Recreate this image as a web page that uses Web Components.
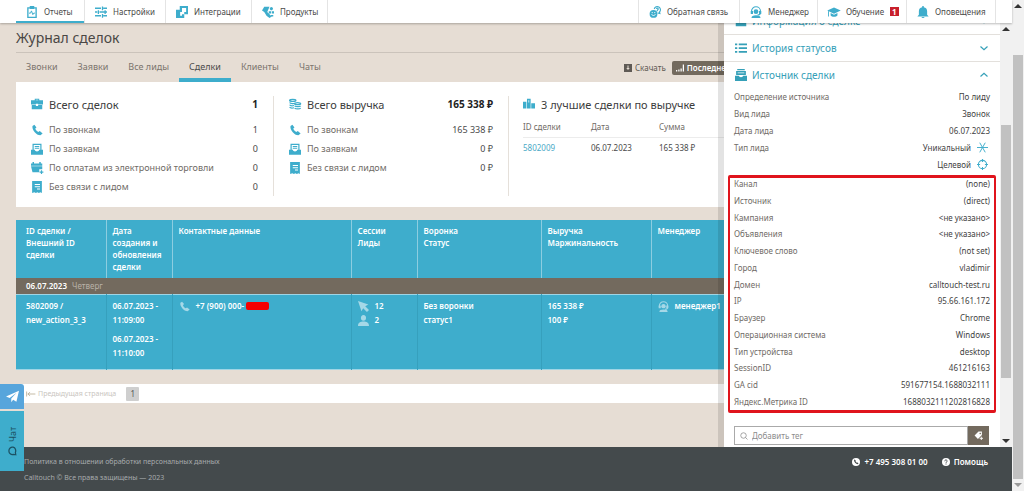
<!DOCTYPE html>
<html lang="ru">
<head>
<meta charset="utf-8">
<title>Журнал сделок</title>
<style>
  html { height: 100%; }
  body { margin: 0; min-height: 100%; display: flex; font-family: "Noto Sans", "Open Sans", sans-serif; font-size: 9px; color: #4a4a4a;
    --blue: #3eadcc; --teal: #35a0b8; --brown: #736a5e; --sand: #e6ddd4; }
  ct-app { flex: 1; }
</style>
</head>
<body>
<ct-app></ct-app>
<script>
const ICONS = {
  report: '<path fill="none" stroke="currentColor" stroke-width="1.8" d="M2.5 2.5h11v12.600h-11z"/><path fill="currentColor" d="M5 0h6v4H5z"/><path fill="none" stroke="currentColor" stroke-width="1.300" d="M4 9.500h2l1.300-3 1.800 5 1.200-2H12"/>',
  sliders: '<g fill="none" stroke="currentColor" stroke-width="1.700"><path d="M0 3h8M11 3h5M0 8h3M6 8h10M0 13h8M11 13h5M10 .5v5M4.500 5.500v5M10 10.500v5M13.500 5.500v5"/></g>',
  blocks: '<path fill="currentColor" fill-rule="evenodd" d="M5 0h11v11h-5v5H0V5h5zm3 2.500V8H5.500v5H8v-2h3V8h2.500V2.500z"/>',
  product: '<path fill="currentColor" d="M3 1h7L7 8l6 6-3 2-4-3-3-5-3-2zM11 2a2 2 0 1 1 3 3 2 2 0 0 1-3-3zM13 7h3v3h-3zM9 7h3v3H9zM12 12h3v2h-3z"/>',
  feedback: '<g fill="none" stroke="currentColor" stroke-width="1.500"><path d="M7 4a4.200 4.200 0 1 1 7 4l.5 2-3-.800"/><path d="M9.500 3.600c1-1.600 3.500-.6 2.600 1L11 6v1"/></g><circle cx="6" cy="10.500" r="5.200" fill="currentColor"/><path d="M3.500 11a2.700 2.700 0 0 0 5 0" fill="none" stroke="#fff" stroke-width="1.200"/><circle cx="4.300" cy="8.700" r=".8" fill="#fff"/><circle cx="7.700" cy="8.700" r=".8" fill="#fff"/>',
  agent: '<path d="M2 9V7a6 6 0 0 1 12 0v2c0 2-2 3-4 3" fill="none" stroke="currentColor" stroke-width="1.500"/><path fill="currentColor" d="M1 6.500h3v4H1zM12 6.500h3v4h-3zM2 16c0-2.500 2-3.600 6-3.600s6 1.100 6 3.600z"/><circle cx="8" cy="7.500" r="3.200" fill="currentColor"/>',
  cap: '<path fill="currentColor" d="M8 2l9 4-9 4.300L-1 6zM3.500 9.300L8 11.500l4.600-2.200v3.500C11 15 5 15 3.500 12.800zM0 7h1.200v7H0z"/>',
  bell: '<path fill="currentColor" d="M7 0h2v1.500c3 .5 4.500 2.500 4.500 5.500v4.500L15.500 14H.5l2-2.500V7c0-3 1.500-5 4.500-5.500zM6 14.500h4a2 1.500 0 0 1-4 0z"/>',
  briefcase: '<path fill="currentColor" fill-rule="evenodd" d="M5 3V1h6v2h5v5.500H9.500V7.500h-3v1H0V3zm1.300 0h3.400v-.8H6.300zM1 9.300h5.500v1.200h3V9.300H15V15H1z"/>',
  phone: '<path fill="currentColor" d="M4.500 1L2 2.500C.8 7 7 15 12.500 15l3-2.500-3.800-3.200-2 1.300C8 9.800 6 7.500 5.700 6l1.600-1.500z"/>',
  mail: '<path fill="currentColor" fill-rule="evenodd" d="M2 1h12v8h2v6.500H0V9h2zm1.600 1.500V9H5c.5 3 5.500 3 6 0h1.400V2.500zM5 4h6v1.300H5zm0 2.300h6v1.300H5z"/>',
  calendar: '<path fill="currentColor" d="M0 2h2V0h2v2h7V0h2v2h2v3H0zM0 5.800h15v4h-4v4H2z"/><path fill="none" stroke="currentColor" stroke-width="1.600" d="M14 11v5M11.500 13.500h5"/>',
  doc: '<path fill="currentColor" fill-rule="evenodd" d="M1.500 0h13v16l-2-1-2 1-2-1-2 1-2-1-3 1zM5 4v1.400h7V4zm0 3v1.400h7V7zm3 3v1.400h4V10z"/>',
  coins: '<g fill="none" stroke="currentColor" stroke-width="1.700"><ellipse cx="5" cy="3.200" rx="4.200" ry="1.400"/><path d="M.8 6c1 1.800 6 1.800 7 .8M.8 9c1 1.500 4 1.500 6 1M.8 12c1 1.500 4 1.500 6 1"/><ellipse cx="11.500" cy="7.500" rx="4" ry="1.300"/><path d="M7.500 10.500c1.500 1.500 7 1.500 8 0M7.500 13.500c1.500 1.500 7 1.500 8 0"/></g>',
  podium: '<path fill="currentColor" d="M5.300 1h4.900v13H5.300zM0 5h4.500v9H0zM11 7h5v7h-5z"/><path stroke="#fff" d="M7.700 3v3"/>',
  list: '<path fill="currentColor" d="M0 2h3v2.400H0zM5 2h11v2.400H5zM0 7h3v2.400H0zM5 7h11v2.400H5zM0 12h3v2.400H0zM5 12h11v2.400H5z"/>',
  inbox: '<path fill="currentColor" fill-rule="evenodd" d="M3 0h10v1.500H3zM1.500 2.500h13V8h-13zM3.500 4.500v1h9v-1zM0 9h5c.5 2.500 5.500 2.500 6 0h5v7H0z"/>',
  down: '<path fill="none" stroke="currentColor" stroke-width="2.400" d="M1 5l7 6.500L15 5"/>',
  up: '<path fill="none" stroke="currentColor" stroke-width="2.400" d="M1 11l7-6.500L15 11"/>',
  star: '<path fill="none" stroke="currentColor" stroke-width="1.400" d="M0 8h16M4 1l8 14M12 1L4 15"/>',
  target: '<circle cx="8" cy="8" r="6" fill="none" stroke="currentColor" stroke-width="1.500"/><path stroke="currentColor" stroke-width="1.500" d="M8 0v4.500M8 11.500V16M0 8h4.500M11.500 8H16"/>',
  cursor: '<path fill="currentColor" d="M0 0l15 5-4.500 2.500L16 13l-3 3-5.500-5.500L5 15z"/>',
  person: '<path fill="currentColor" d="M8 0c5 0 5 8.500 0 8.500S3 0 8 0zM0 16c0-5 3.500-6.500 8-6.500s8 1.500 8 6.500z"/>',
  save: '<path fill="currentColor" fill-rule="evenodd" d="M0 0h16v16H0zm7 3v5H4.500L8 12l3.500-4H9V3z"/>',
  signal: '<path fill="currentColor" d="M0 12h2.500v3H0zM4.500 11H7v4H4.500zM9 9h2.500v6H9zM13.500 1H16v14h-2.500z"/>',
  search: '<circle cx="7" cy="7" r="5.500" fill="none" stroke="currentColor" stroke-width="1.500"/><path stroke="currentColor" stroke-width="1.500" d="M11 11l4 4"/>',
  tag: '<path fill="currentColor" fill-rule="evenodd" d="M8 1h6v6l-7 7-6-6zm3 2a1.300 1.300 0 1 0 .1 0z"/><path stroke="currentColor" stroke-width="1.600" d="M13 10v6M10 13h6"/>',
  plane: '<path fill="currentColor" d="M16 1L0 8l4.500 1.800L13 3.500 6.500 10.500V15l2.300-3 4 2.500z"/>',
  bubble: '<path fill="none" stroke="currentColor" stroke-width="2" d="M2 14l.5-4a6 5.500 0 1 1 3 3.400z"/>',
  call: '<circle cx="8" cy="8" r="8" fill="#fff"/><path fill="#444a4c" d="M5.500 3L4 4.200C4 8.500 7.500 12 11.500 12.300L13 10.600l-2.200-1.800-1.200.8C8.600 9 7.400 7.600 7 6.500l.7-1.200z"/>',
  help: '<circle cx="8" cy="8" r="8" fill="#fff"/><path fill="none" stroke="#444a4c" stroke-width="1.800" d="M5.500 6.500c0-4 5.500-3 4.700 0C10 7.700 8 8 8 9.800M8 11v2"/>',
  prev: '<path fill="none" stroke="currentColor" stroke-width="1.300" d="M1 4v8M15 8H3M6.500 5L3 8l3.500 3"/>'
};

function define(name, css, html, setup) {
  const t = document.createElement('template');
  customElements.define(name, class extends HTMLElement {
    constructor() { super(); this.attachShadow({ mode: 'open' }); }
    connectedCallback() {
      t.innerHTML = '<style>*{box-sizing:border-box}' + css + '</style>' + (typeof html === 'function' ? html(this) : html);
      this.shadowRoot.replaceChildren(t.content.cloneNode(true));
      if (setup) setup(this);
    }
  });
}
const icon = (n, c = '') => `<ct-icon name="${n}" class="${c}"></ct-icon>`;

define('ct-icon', ':host{display:inline-block;flex:none;width:12px;height:12px}svg{display:block;width:100%;height:100%;overflow:visible}',
  el => `<svg viewBox="0 0 16 16" aria-hidden="true">${ICONS[el.getAttribute('name')]}</svg>`);

define('ct-scrollbar', `
  :host{display:flex;flex-direction:column;align-items:center;width:12px;background:#f1f1f1}
  i{width:0;height:0;border:4px solid transparent;border-top:0;border-bottom:4px solid #333;margin:4px 0}
  i:last-of-type{border-top:4px solid #333;border-bottom:0}
  :host([dim]) i:last-of-type{border-top-color:#999}
  .before{flex:var(--before) 0 0px}.thumb{flex:var(--thumb) 0 0px;width:10px;background:#c1c1c1}.after{flex:var(--after) 0 0px}`,
  '<i></i><span class="before"></span><span class="thumb"></span><span class="after"></span><i></i>');

define('ct-nav-item', `
  :host{display:block;border-right:1px solid #e4e4e4}
  a{display:flex;align-items:center;height:23px;padding-left:10px;gap:6px;color:#4a4a4a;text-decoration:none;white-space:nowrap;font-size:8px}
  ct-icon{color:var(--blue)}
  :host([active]) a{border-bottom:2px solid var(--blue);padding-top:2px}
  b{background:#c8202c;color:#fff;line-height:9px;padding:0 2px}`,
  el => `<a href="#">${icon(el.getAttribute('icon'))}<slot></slot>${el.hasAttribute('count') ? `<b>${el.getAttribute('count')}</b>` : ''}</a>`);

define('ct-header', `
  :host{display:flex;justify-content:space-between;background:#fff;height:23px;padding:0 16px;box-shadow:0 1px 2px #0004;position:relative;z-index:3}
  nav{display:grid}
  .main{grid-template-columns:69px 81px 86px 76px}.user{grid-template-columns:101px 78px 89px 89px;border-left:1px solid #e4e4e4}`,
  `<nav class="main"><ct-nav-item icon="report" active>Отчеты</ct-nav-item><ct-nav-item icon="sliders">Настройки</ct-nav-item><ct-nav-item icon="blocks">Интеграции</ct-nav-item><ct-nav-item icon="product">Продукты</ct-nav-item></nav>
   <nav class="user"><ct-nav-item icon="feedback">Обратная связь</ct-nav-item><ct-nav-item icon="agent">Менеджер</ct-nav-item><ct-nav-item icon="cap" count="1">Обучение</ct-nav-item><ct-nav-item icon="bell">Оповещения</ct-nav-item></nav>`);

define('ct-tabs', `
  :host{display:flex;height:30px;border-top:1px solid #cbc3bb}
  nav{display:flex;flex:1}
  a{padding:0 10px;line-height:28px;font-size:9px;color:#7b746d;text-decoration:none;white-space:nowrap}
  a.on{color:#4a4a4a;border-bottom:4px solid var(--blue)}
  .tools{display:flex;align-items:center;gap:6px;width:372px}
  button{display:flex;align-items:center;gap:3px;border:0;padding:0;background:none;font:inherit;font-size:8px;color:#5f5a55;height:14px}
  .model{flex:1;background:var(--brown);color:#fff;border-radius:2px;padding:0 4px;font-weight:600}
  ct-icon{width:8px;height:8px}`,
  `<nav><a href="#">Звонки</a><a href="#">Заявки</a><a href="#">Все лиды</a><a href="#" class="on">Сделки</a><a href="#">Клиенты</a><a href="#">Чаты</a></nav>
   <div class="tools"><button>${icon('save')}Скачать</button><button class="model">${icon('signal')}Последнее</button></div>`);

define('ct-stat', `
  :host{display:flex;align-items:center;gap:6px;height:19px;color:#706b66;font-size:9px;white-space:nowrap}
  :host([head]){height:16px;margin-bottom:8px;font-size:11px;color:#3c3c3c}
  ct-icon{color:var(--blue)}
  output{margin-left:auto;color:#4a4a4a}:host([head]) output{font-weight:700;color:#222;font-size:10px}`,
  el => `${icon(el.getAttribute('icon'))}<slot></slot><output>${el.getAttribute('value') || ''}</output>`);

define('ct-summary', `
  :host{display:grid;grid-template-columns:258px 235px 1fr;background:#fff;padding:14px 0 11px}
  section{padding:0 15px;border-right:1px solid #e5e0da}section:first-child{padding-left:16px}section:last-child{border:0;padding:0 0 0 14px}
  table{border-collapse:collapse;font-size:8px;table-layout:fixed;width:100%}
  th,td{padding:0;text-align:left;font-weight:400;height:20px;color:#706b66}th{height:17px;padding-bottom:3px}td{color:#4a4a4a}
  thead tr{border-bottom:1px solid #ececec}
  th:nth-child(-n+2){width:68px}a{color:#4aa9c6;text-decoration:none}`,
  `<section><ct-stat head icon="briefcase" value="1">Всего сделок</ct-stat><ct-stat icon="phone" value="1">По звонкам</ct-stat><ct-stat icon="mail" value="0">По заявкам</ct-stat><ct-stat icon="calendar" value="0">По оплатам из электронной торговли</ct-stat><ct-stat icon="doc" value="0">Без связи с лидом</ct-stat></section>
   <section><ct-stat head icon="coins" value="165 338 ₽">Всего выручка</ct-stat><ct-stat icon="phone" value="165 338 ₽">По звонкам</ct-stat><ct-stat icon="mail" value="0 ₽">По заявкам</ct-stat><ct-stat icon="doc" value="0 ₽">Без связи с лидом</ct-stat></section>
   <section><ct-stat head icon="podium">3 лучшие сделки по выручке</ct-stat>
   <table><thead><tr><th>ID сделки</th><th>Дата</th><th>Сумма</th></tr></thead><tbody><tr><td><a href="#">5802009</a></td><td>06.07.2023</td><td>165 338 ₽</td></tr></tbody></table></section>`);

define('ct-deals', `
  :host{display:block;margin-top:13px}
  table{width:100%;border-collapse:collapse;table-layout:fixed;background:var(--blue);color:#fff;font-size:8px}
  th,td{text-align:left;vertical-align:top;padding:5px 5px 5px 6px;font-weight:600;line-height:12px}
  th:first-child,td:first-child{padding-left:10px}
  th{height:58px;border-right:1px solid #8ccde0}
  .day td{background:var(--brown);height:16px;padding:2px 10px}.day span{color:#b9b2a8;margin-left:5px;font-weight:400}
  .row td{line-height:14px;height:75px;border-right:1px solid #36a0bd;padding-top:4px;padding-bottom:8px}
  .row{border-top:1px solid #9fd5e5;border-bottom:1px solid #9fd5e5}
  th:last-child,.row td:last-child{border-right:0}
  p{margin:0 0 5px}p:last-child{margin:0}
  .line{display:flex;align-items:center;gap:6px}
  ct-icon{color:#a5d8e7;width:11px;height:11px}
  .phone{display:flex;align-items:center;gap:2px}
  .mask{width:23px;height:8px;border-radius:2px;background:#f50000}`,
  `<table><colgroup><col style="width:90px"><col style="width:66px"><col style="width:179px"><col style="width:66px"><col style="width:124px"><col style="width:110px"><col></colgroup>
   <thead><tr><th>ID сделки /<br>Внешний ID<br>сделки</th><th>Дата<br>создания и<br>обновления<br>сделки</th><th>Контактные данные</th><th>Сессии<br>Лиды</th><th>Воронка<br>Статус</th><th>Выручка<br>Маржинальность</th><th>Менеджер</th></tr></thead>
   <tbody><tr class="day"><td colspan="7">06.07.2023<span>Четверг</span></td></tr>
   <tr class="row"><td>5802009 /<br>new_action_3_3</td><td><p>06.07.2023 -<br>11:09:00</p><p>06.07.2023 -<br>11:10:00</p></td><td><div class="line">${icon('phone')}<span class="phone">+7 (900) 000-<i class="mask"></i></span></div></td>
   <td><div class="line">${icon('cursor')}12</div><div class="line">${icon('person')}2</div></td><td>Без воронки<br>статус1</td><td>165 338 ₽<br>100 ₽</td><td><div class="line">${icon('agent')}менеджер1</div></td></tr></tbody></table>`);

define('ct-pager', `
  :host{display:flex;align-items:center;gap:10px;background:#fff;height:19px;margin-top:14px;padding:0 10px;font-size:8px}
  a{display:flex;align-items:center;gap:2px;color:#c9c5c0;text-decoration:none;font-size:7px}
  ct-icon{width:10px;height:10px;color:#b7ab92}
  button{border:0;padding:0;width:13px;height:14px;border-radius:1px;background:#cfcfcf;color:#555;font:inherit}`,
  `<a href="#">${icon('prev')}Предыдущая страница</a><button>1</button>`);

define('ct-field', `
  :host{display:flex;justify-content:space-between;line-height:var(--row,17px);height:var(--row,17px);font-size:8px;color:#706b66;white-space:nowrap}
  .value{color:#3f3f3f;display:flex;align-items:center;gap:6px;margin-left:auto}ct-icon{width:11px;height:11px;margin-right:2px;color:var(--blue)}`,
  el => `${el.getAttribute('label') || ''}<span class="value"><slot></slot>${el.hasAttribute('icon') ? icon(el.getAttribute('icon')) : ''}</span>`);

define('ct-section', `
  :host{display:block;flex:none;border-top:1px solid #e3e0dc}
  button{display:flex;align-items:center;gap:5px;width:100%;height:26px;border:0;padding:0 12px 0 11px;background:none;color:var(--teal);font:inherit;font-size:10px}
  .arrow{margin-left:auto;width:8px;height:8px}`,
  el => `<button>${icon(el.getAttribute('icon'))}<span>${el.getAttribute('label')}</span>${icon(el.hasAttribute('open') ? 'up' : 'down', 'arrow')}</button><slot></slot>`);

define('ct-drawer', `
  :host{display:flex;background:#fff;box-shadow:-6px 0 0 #0000001c}
  .body{flex:1;display:flex;flex-direction:column;justify-content:flex-end;min-width:0;padding-bottom:2px;overflow:hidden}
  .plain{padding:0 10px}
  .marked{--row:12px;height:238px;margin:2px 4px 13px;border:3px solid #e0141c;border-width:3px 2px;padding:0 4px 2px;display:flex;flex-direction:column;justify-content:space-between;border-radius:2px}
  form{display:flex;height:19px;margin:0 11px 0 10px;flex:none}
  label{flex:1;display:flex;align-items:center;gap:4px;padding-left:5px;border:1px solid #aaa;color:#888}
  label ct-icon{width:8px;height:8px}
  input{flex:1;min-width:0;border:0;outline:0;padding:0;background:none;font:inherit;font-size:8px;height:15px}input::placeholder{color:#8c8c8c}
  form button{width:21px;border:0;padding:0;background:var(--brown);color:#fff;display:grid;place-items:center}form button ct-icon{width:9px;height:9px}
  ct-scrollbar{--before:90;--thumb:253;--after:57}`,
  `<div class="body"><ct-section icon="briefcase" label="Информация о сделке"></ct-section><ct-section icon="list" label="История статусов"></ct-section>
   <ct-section icon="inbox" label="Источник сделки" open>
   <div class="plain"><ct-field label="Определение источника">По лиду</ct-field><ct-field label="Вид лида">Звонок</ct-field><ct-field label="Дата лида">06.07.2023</ct-field><ct-field label="Тип лида" icon="star">Уникальный</ct-field><ct-field icon="target">Целевой</ct-field></div>
   <div class="marked"></div></ct-section>
   <form><label>${icon('search')}<input placeholder="Добавить тег" aria-label="Добавить тег"></label><button type="button" aria-label="Добавить">${icon('tag')}</button></form></div>
   <ct-scrollbar></ct-scrollbar>`,
  el => {
    const box = el.shadowRoot.querySelector('.marked');
    [['Канал', '(none)'], ['Источник', '(direct)'], ['Кампания', '<не указано>'], ['Объявления', '<не указано>'], ['Ключевое слово', '(not set)'], ['Город', 'vladimir'], ['Домен', 'calltouch-test.ru'], ['IP', '95.66.161.172'], ['Браузер', 'Chrome'], ['Операционная система', 'Windows'], ['Тип устройства', 'desktop'], ['SessionID', '461216163'], ['GA cid', '591677154.1688032111'], ['Яндекс.Метрика ID', '1688032111202816828']]
      .forEach(([k, v]) => { const f = document.createElement('ct-field'); f.setAttribute('label', k); f.textContent = v; box.append(f); });
  });

define('ct-chat', `
  :host{display:flex;flex-direction:column;gap:2px;width:24px}
  a,button{display:flex;align-items:center;justify-content:center;color:#fff;background:#57a5dc;height:25px;border-radius:0 3px 0 0}
  a ct-icon{width:13px;height:13px}
  button{height:60px;border:0;padding:0;background:var(--blue);color:#1c5163;font:inherit;font-size:9px;border-radius:0;writing-mode:vertical-rl;transform:rotate(180deg);gap:4px}
  button ct-icon{width:10px;height:10px;transform:rotate(90deg)}`,
  `<a href="#" aria-label="Telegram">${icon('plane')}</a><button>${icon('bubble')}<span>Чат</span></button>`);

define('ct-footer', `
  :host{display:flex;justify-content:space-between;background:#444a4c;padding:7px 24px 4px;font-size:7px;line-height:16px;color:#a7abac}
  p{margin:0}a{color:inherit;text-decoration:none}
  .help{display:flex;gap:14px;font-size:8px;font-weight:600;color:#fff}.help a{display:flex;align-items:center;height:16px;gap:4px}
  ct-icon{width:8px;height:8px}`,
  `<div><p><a href="#">Политика в отношении обработки персональных данных</a></p><p>Calltouch © Все права защищены — 2023</p></div>
   <div class="help"><a href="#">${icon('call')}+7 495 308 01 00</a><a href="#">${icon('help')}Помощь</a></div>`);

define('ct-app', `
  :host{display:flex;min-width:0}
  .page{flex:1;min-width:0;display:flex;flex-direction:column;position:relative;background:var(--sand)}
  main{position:relative;padding:4px 16px 44px}
  h1{margin:0 0 3px;font-size:14px;font-weight:400;line-height:22px;color:#4a4744}
  ct-drawer{position:absolute;top:0;bottom:0;right:0;width:288px}
  ct-footer{flex:1}
  ct-chat{position:absolute;left:0;bottom:20px}
  ct-scrollbar{--before:43;--thumb:425;--after:0}`,
  `<div class="page"><ct-header></ct-header><main><h1>Журнал сделок</h1><ct-tabs></ct-tabs><ct-summary></ct-summary><ct-deals></ct-deals><ct-pager></ct-pager><ct-drawer></ct-drawer></main><ct-footer></ct-footer><ct-chat></ct-chat></div><ct-scrollbar dim></ct-scrollbar>`);
</script>
</body>
</html>
